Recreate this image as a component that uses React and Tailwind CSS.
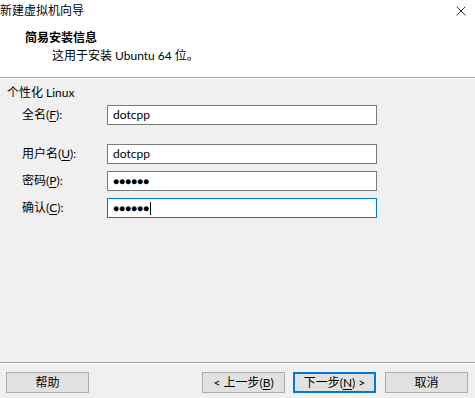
import React from 'react';

const FONT = { fontFamily: 'Lato, "Noto Sans CJK SC", sans-serif' };

function Field({ label, hot, value, secret, focused, className = '' }) {
  return (
    <div className={`flex items-center h-[20px] ${className}`}>
      <div className="w-[107px] pl-[22px] leading-[14px]">
        {label}(<span className="underline underline-offset-2">{hot}</span>):
      </div>
      <div
        className={`w-[270px] h-[20px] bg-white border flex items-center pl-[5px] ${
          focused ? 'border-[#0078d7]' : 'border-[#7a7a7a]'
        }`}
      >
        {secret ? (
          <span className="text-[10px] leading-[12px]">●●●●●●</span>
        ) : (
          <span className="leading-[14px]">{value}</span>
        )}
        {focused && <span className="w-px h-[13px] bg-black ml-px" />}
      </div>
    </div>
  );
}

function Btn({ children, focused, className = '' }) {
  return (
    <button
      className={`h-[21px] w-[83px] bg-[#e1e1e1] flex items-center justify-center leading-[14px] ${
        focused ? 'border-2 border-[#0078d7]' : 'border border-[#adadad]'
      } ${className}`}
    >
      {children}
    </button>
  );
}

export default function App() {
  return (
    <div className="w-[475px] h-[398px] bg-[#f0f0f0] flex flex-col text-[12px] text-black" style={FONT}>
      {/* header */}
      <div className="bg-white h-[77px] flex flex-col">
        <div className="flex items-center justify-between h-[22px]">
          <span className="leading-[14px]">新建虚拟机向导</span>
          <svg width="10" height="10" viewBox="0 0 10 10" className="mr-[9px] mt-[-1px]">
            <path d="M0.5 0.5L9.5 9.5M9.5 0.5L0.5 9.5" stroke="#333" strokeWidth="1" />
          </svg>
        </div>
        <div className="pl-[25px] mt-[9px] font-bold leading-[14px]">简易安装信息</div>
        <div className="pl-[52px] mt-[4px] leading-[14px]">这用于安装 Ubuntu 64 位。</div>
      </div>
      <div className="h-px bg-[#a0a0a0]" />
      <div className="h-px bg-white" />

      {/* body */}
      <div className="flex-1 flex flex-col">
        <div className="pl-[7px] mt-[7px] leading-[14px]">个性化 Linux</div>
        <Field label="全名" hot="F" value="dotcpp" className="mt-[5px]" />
        <Field label="用户名" hot="U" value="dotcpp" className="mt-[19px]" />
        <Field label="密码" hot="P" secret className="mt-[7px]" />
        <Field label="确认" hot="C" secret focused className="mt-[7px]" />
      </div>

      {/* footer */}
      <div className="h-px bg-[#a0a0a0]" />
      <div className="h-px bg-white" />
      <div className="flex items-center pt-[8px] pb-[5px] pl-[6px] pr-[7px]">
        <Btn className="w-[82px]">帮助</Btn>
        <div className="flex-1" />
        <Btn>
          &lt; 上一步(<span className="underline underline-offset-2">B</span>)
        </Btn>
        <Btn focused className="ml-[8px]">
          下一步(<span className="underline underline-offset-2">N</span>) &gt;
        </Btn>
        <Btn className="ml-[9px]">取消</Btn>
      </div>
    </div>
  );
}
